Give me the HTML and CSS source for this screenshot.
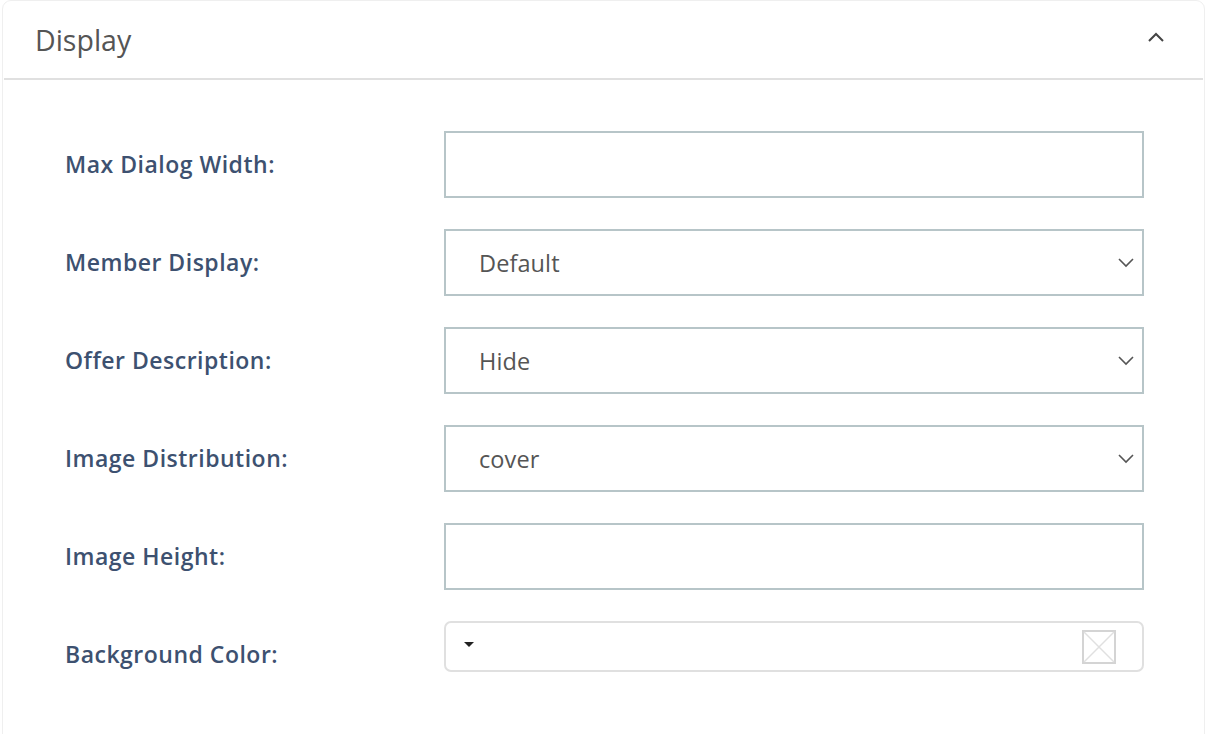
FILE: index.html
```html
<!DOCTYPE html>
<html>
<head>
<meta charset="utf-8">
<link rel="stylesheet" href="styles.css">
</head>
<body>
<div class="card">
  <div class="card-header">
    <span class="title">Display</span>
    <svg class="collapse" width="18" height="12" viewBox="0 0 18 12"><path d="M2 9 L9 2 L16 9" fill="none" stroke="#444" stroke-width="2"/></svg>
  </div>
  <div class="card-body">
    <div class="row">
      <label class="label">Max Dialog Width:</label>
      <div class="field input"></div>
    </div>
    <div class="row">
      <label class="label">Member Display:</label>
      <div class="field select"><span>Default</span><svg class="chev" width="18" height="12" viewBox="0 0 18 12"><path d="M2 3 L9 10 L16 3" fill="none" stroke="#555" stroke-width="1.6"/></svg></div>
    </div>
    <div class="row">
      <label class="label">Offer Description:</label>
      <div class="field select"><span>Hide</span><svg class="chev" width="18" height="12" viewBox="0 0 18 12"><path d="M2 3 L9 10 L16 3" fill="none" stroke="#555" stroke-width="1.6"/></svg></div>
    </div>
    <div class="row">
      <label class="label">Image Distribution:</label>
      <div class="field select"><span>cover</span><svg class="chev" width="18" height="12" viewBox="0 0 18 12"><path d="M2 3 L9 10 L16 3" fill="none" stroke="#555" stroke-width="1.6"/></svg></div>
    </div>
    <div class="row">
      <label class="label">Image Height:</label>
      <div class="field input"></div>
    </div>
    <div class="row">
      <label class="label">Background Color:</label>
      <div class="color">
        <svg class="tri" width="10" height="6" viewBox="0 0 10 6"><path d="M0 0 H10 L5 5 Z" fill="#222"/></svg>
        <svg class="nocolor" width="34" height="34" viewBox="0 0 34 34"><rect x="1" y="1" width="32" height="32" fill="none" stroke="#d4d4d4" stroke-width="2"/><path d="M2 2 L32 32 M32 2 L2 32" stroke="#e0e0e0" stroke-width="1.5"/></svg>
      </div>
    </div>
  </div>
</div>
</body>
</html>
```
FILE: styles.css
```css
html, body {
  margin: 0;
  padding: 0;
  background: #fff;
  font-family: "Open Sans", "Noto Sans", sans-serif;
}
.card {
  margin-left: 2px;
  width: 1203px;
  height: 760px;
  border: 1px solid #efefef;
  border-radius: 9px 9px 0 0;
  box-sizing: border-box;
}
.card-header {
  height: 77px;
  margin: 0 1px;
  border-bottom: 2px solid #e0e0e0;
  display: flex;
  align-items: center;
  justify-content: space-between;
  padding: 0 38px 0 31px;
}
.title {
  font-size: 28.5px;
  color: #555;
  font-weight: 400;
  margin-top: 0;
}
.collapse {
  margin-top: -4px;
}
.card-body {
  padding: 51px 0 0 62px;
  display: flex;
  flex-direction: column;
  gap: 31px;
}
.row {
  display: grid;
  grid-template-columns: 379px 700px;
  align-items: start;
}
.label {
  font-size: 23px;
  line-height: 67px;
  font-weight: 600;
  color: #3d5170;
  letter-spacing: 0.5px;
}
.field {
  height: 67px;
  box-sizing: border-box;
  border: 2px solid #b7c5c8;
  display: flex;
  align-items: center;
  justify-content: space-between;
  padding: 0 7px 0 33px;
}
.field span {
  font-size: 23.5px;
  color: #555;
  letter-spacing: 0.1px;
}
.chev {
  margin-top: -2px;
}
.color {
  height: 51px;
  box-sizing: border-box;
  border: 2px solid #e0e0e0;
  border-radius: 7px;
  display: flex;
  align-items: center;
  justify-content: space-between;
  padding: 0 26px 0 18px;
}
.tri {
  margin-top: -4px;
}
```
